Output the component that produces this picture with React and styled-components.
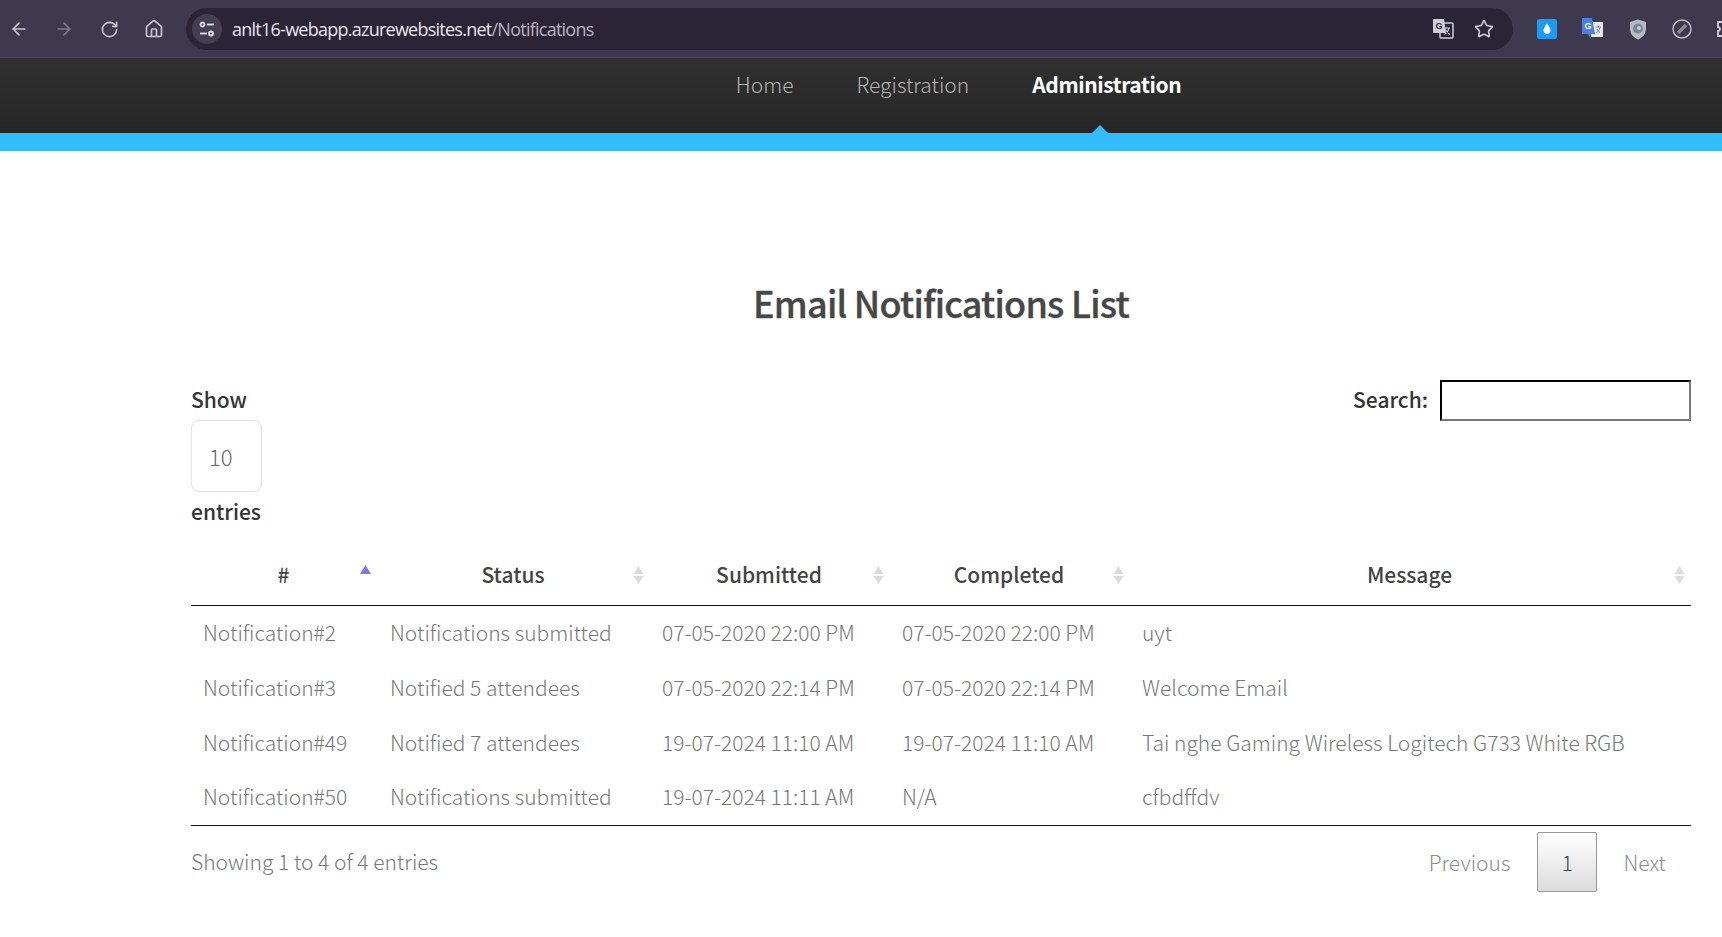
import React from "react";
import styled, { createGlobalStyle } from "styled-components";
import { ArrowLeft, ArrowRight, RotateCw, Home as HomeIcon, Star } from "lucide-react";

const Global = createGlobalStyle`
  html, body { margin: 0; padding: 0; height: 937px; overflow: hidden; background: #fff; }
  body { font-family: "Noto Sans CJK SC", "Open Sans", sans-serif; font-weight: 300; color: #666; }
  * { box-sizing: border-box; }
`;

const Toolbar = styled.div`
  height: 58px; background: #3f3950; border-bottom: 1px solid #4d4859;
  display: flex; align-items: center; overflow: hidden;
  padding: 1px 0 0 6px; position: relative;
`;
const NavIcon = styled.span`
  width: 26px; height: 26px; display: flex; align-items: center; justify-content: center;
  margin-right: 19px; color: ${p => (p.$dim ? "#7f7a8a" : "#c9c6d1")}; flex: none;
`;
const AddressBar = styled.div`
  width: 1327px; height: 42px; margin-left: 0; border-radius: 21px; background: #2b2437;
  display: flex; align-items: center; padding: 0 19px 0 6px; flex: none;
`;
const SiteChip = styled.span`
  width: 30px; height: 30px; border-radius: 50%; background: #443e52; flex: none;
  display: flex; align-items: center; justify-content: center;
`;
const Url = styled.span`
  font-family: "Open Sans", sans-serif; font-weight: 400; font-size: 18px; letter-spacing: -0.75px;
  margin-left: 10px; color: #e8e6ee; flex: 1; white-space: nowrap;
`;
const UrlPath = styled.span`color: #b7b3c2;`;
const BarActions = styled.span`display: flex; align-items: center; gap: 20px; color: #c9c6d1;`;
const Extensions = styled.div`display: flex; align-items: center; gap: 25px; margin-left: 24px; flex: none;`;

const NavBar = styled.nav`
  height: 75px; background: linear-gradient(#303030, #262626);
  display: flex; justify-content: center; gap: 63px; padding: 0 0 0 195px;
`;
const NavLink = styled.a`
  position: relative; height: 75px; line-height: 53px; font-size: 21px; white-space: nowrap;
  font-weight: ${p => (p.$active ? 700 : 300)}; color: ${p => (p.$active ? "#fff" : "#b4b4b4")};
  letter-spacing: ${p => (p.$active ? "-0.4px" : "0")};
  ${p => p.$active && `
    &::after {
      content: ""; position: absolute; left: 60px; bottom: 0; width: 0; height: 0;
      border-left: 8px solid transparent; border-right: 8px solid transparent;
      border-bottom: 8px solid #35bdfb;
    }
  `}
`;
const Stripe = styled.div`height: 18px; background: #35bdfb;`;

const Main = styled.main`padding: 124px 31px 0 191px;`;
const Title = styled.h1`
  margin: 0; text-align: center; font-size: 36px; line-height: 54px; font-weight: 500; color: #474747;
  letter-spacing: -0.78px; -webkit-text-stroke: 0.35px #474747;
`;
const Controls = styled.div`
  display: flex; justify-content: space-between; align-items: flex-start; margin-top: 51px; height: 170px;
`;
const LengthBox = styled.div`
  font-size: 21px; font-weight: 500; line-height: 30px; color: #333; padding-top: 4px;
`;
const LengthLabel = styled.div`line-height: 30px;`;
const SelectBox = styled.div`
  width: 71px; height: 72px; margin: 6px 0 4px; padding-left: 17px; border: 1px solid #e3e3e3; border-radius: 8px;
  display: flex; align-items: center; font-size: 22px; font-weight: 300; color: #666; padding-bottom: 1px;
`;
const SearchBox = styled.label`
  display: flex; align-items: center; gap: 12px; font-size: 21px; font-weight: 500; color: #333;
`;
const SearchText = styled.span`margin-bottom: 3px;`;
const SearchInput = styled.input`
  width: 251px; height: 41px; border-width: 2px; border-style: inset; border-color: #333 #777 #777 #333;
  background: #fff; padding: 0;
`;
const Table = styled.table`
  width: 1500px; border-collapse: collapse; table-layout: fixed;
  border-bottom: 1px solid #111;
`;
const HeadCell = styled.th`
  position: relative; height: 55px; padding: 0 14px 7px 12px; text-align: center;
  font-size: 21px; font-weight: 500; color: #444; border-bottom: 1px solid #111; white-space: nowrap;
`;
const SortMark = styled.svg`
  position: absolute; right: ${p => p.$right}px; top: ${p => p.$top}px;
`;
const Row = styled.tr`height: 55px;`;
const Cell = styled.td`
  padding: 0 12px 2px; font-size: 21px; font-weight: 300; color: #777; white-space: nowrap;
`;
const Footer = styled.div`display: flex; justify-content: space-between; align-items: center; padding-top: 6px;`;
const Info = styled.div`font-size: 21px; color: #777; margin-bottom: 2px;`;
const Pager = styled.div`display: flex; align-items: center; font-size: 21px; color: #8c8c8c; padding-right: 25px;`;
const PageCurrent = styled.span`
  width: 60px; height: 60px; margin: 0 26px 0 27px; display: flex; align-items: center; justify-content: center;
  border: 1px solid #979797; border-radius: 2px; color: #444;
  background: linear-gradient(#fff, #dcdcdc);
`;

const Sort = ({ active, right = 6 }) =>
  active ? (
    <SortMark $right={right} $top={15} width="11" height="9" viewBox="0 0 11 9">
      <path d="M5.5 0 L11 9 L0 9 Z" fill="#7a7bd6" />
    </SortMark>
  ) : (
    <SortMark $right={right} $top={15} width="11" height="20" viewBox="0 0 11 20">
      <path d="M5.5 1 L10.5 9 L.5 9 Z M.5 11 L10.5 11 L5.5 19 Z" fill="#dcdcdc" />
    </SortMark>
  );

const Tune = () => (
  <svg width="18" height="18" viewBox="0 0 18 18" fill="none" stroke="#e3e1e8" strokeWidth="1.8">
    <circle cx="4.5" cy="4.5" r="2" /><path d="M9 4.5h7" /><path d="M2 13.5h7" /><circle cx="13" cy="13.5" r="2" />
  </svg>
);
const Translate = () => (
  <svg width="22" height="22" viewBox="0 0 22 22">
    <rect x="8" y="5" width="13" height="15" rx="1" fill="none" stroke="#d0ced6" strokeWidth="1.5" />
    <path d="M12 10h6M15 9v1M17 10c-.6 3-2 5-4.5 6.500M13.500 11.500c1 2 2.500 4 4.500 5" stroke="#d0ced6" strokeWidth="1.100" fill="none" />
    <path d="M2 1h10l2 14H2a1 1 0 0 1-1-1V2a1 1 0 0 1 1-1Z" fill="#cfcdd5" />
    <text x="3.500" y="11" fontSize="9" fontWeight="700" fontFamily="Liberation Sans" fill="#2b2437">G</text>
  </svg>
);
const Drop = () => (
  <svg width="20" height="20" viewBox="0 0 20 20">
    <rect width="20" height="20" rx="2" fill="#1c9bf0" />
    <path d="M10 4.500c2 3 3.500 4.800 3.500 6.800a3.500 3.500 0 0 1-7 0c0-2 1.500-3.800 3.500-6.800Z" fill="#fff" />
  </svg>
);
const GTranslate = () => (
  <svg width="22" height="22" viewBox="0 0 22 22">
    <rect x="9" y="4" width="12" height="15" fill="#e8e8e8" />
    <path d="M14 9h5M16.500 8v1M18 9.500c-.5 2-1.500 4-3.500 5M15 11c.8 1.500 1.800 3 3 3.600" stroke="#6f8a80" strokeWidth="1" fill="none" />
    <path d="M0 0h10l3 16H9l-1 4-2-4H0Z" fill="#4a7fe6" />
    <text x="2.500" y="11" fontSize="9" fontWeight="700" fontFamily="Liberation Sans" fill="#fff">G</text>
  </svg>
);
const Shield = () => (
  <svg width="18" height="21" viewBox="0 0 18 21">
    <path d="M9 0.500 L17 3 V10 C17 15 13.500 18.500 9 20.500 C4.500 18.500 1 15 1 10 V3 Z" fill="#b7bac2" />
    <circle cx="9" cy="9.500" r="5" fill="#7f8796" /><circle cx="10" cy="9" r="2" fill="#c7ccd4" />
  </svg>
);
const Compass = () => (
  <svg width="20" height="20" viewBox="0 0 20 20" fill="none">
    <circle cx="10" cy="10" r="9" stroke="#bdbac5" strokeWidth="1.500" />
    <path d="M6 14 L14 6" stroke="#8b8794" strokeWidth="3.500" />
  </svg>
);
const Puzzle = () => (
  <svg width="20" height="20" viewBox="0 0 20 20" fill="none" stroke="#d0ced6" strokeWidth="1.800">
    <path d="M1 3h5a2 2 0 0 1 4 0h5v5a2 2 0 0 1 0 4v5h-5a2 2 0 0 0-4 0H1v-5a2 2 0 0 0 0-4Z" />
  </svg>
);

const columns = [
  { label: "#", width: 187, active: true, right: 7 },
  { label: "Status", width: 272, right: 6 },
  { label: "Submitted", width: 240, right: 6 },
  { label: "Completed", width: 240, right: 6 },
  { label: "Message", width: 561, right: 6 },
];
const rows = [
  ["Notification#2", "Notifications submitted", "07-05-2020 22:00 PM", "07-05-2020 22:00 PM", "uyt"],
  ["Notification#3", "Notified 5 attendees", "07-05-2020 22:14 PM", "07-05-2020 22:14 PM", "Welcome Email"],
  ["Notification#49", "Notified 7 attendees", "19-07-2024 11:10 AM", "19-07-2024 11:10 AM", "Tai nghe Gaming Wireless Logitech G733 White RGB"],
  ["Notification#50", "Notifications submitted", "19-07-2024 11:11 AM", "N/A", "cfbdffdv"],
];

export default function App() {
  return (
    <>
      <Global />
      <Toolbar>
        <NavIcon><ArrowLeft size={20} /></NavIcon>
        <NavIcon $dim><ArrowRight size={20} /></NavIcon>
        <NavIcon><RotateCw size={19} /></NavIcon>
        <NavIcon><HomeIcon size={20} /></NavIcon>
        <AddressBar>
          <SiteChip><Tune /></SiteChip>
          <Url>anlt16-webapp.azurewebsites.net<UrlPath>/Notifications</UrlPath></Url>
          <BarActions><Translate /><Star size={20} /></BarActions>
        </AddressBar>
        <Extensions><Drop /><GTranslate /><Shield /><Compass /><Puzzle /></Extensions>
      </Toolbar>
      <NavBar>
        <NavLink>Home</NavLink>
        <NavLink>Registration</NavLink>
        <NavLink $active>Administration</NavLink>
      </NavBar>
      <Stripe />
      <Main>
        <Title>Email Notifications List</Title>
        <Controls>
          <LengthBox>
            <LengthLabel>Show</LengthLabel>
            <SelectBox>10</SelectBox>
            <LengthLabel>entries</LengthLabel>
          </LengthBox>
          <SearchBox><SearchText>Search:</SearchText><SearchInput /></SearchBox>
        </Controls>
        <Table>
          <colgroup>
            {columns.map(c => <col key={c.label} width={c.width} />)}
          </colgroup>
          <thead>
            <tr>
              {columns.map(c => (
                <HeadCell key={c.label}>
                  {c.label}
                  <Sort active={c.active} right={c.right} />
                </HeadCell>
              ))}
            </tr>
          </thead>
          <tbody>
            {rows.map(r => (
              <Row key={r[0]}>
                {r.map((v, i) => <Cell key={i}>{v}</Cell>)}
              </Row>
            ))}
          </tbody>
        </Table>
        <Footer>
          <Info>Showing 1 to 4 of 4 entries</Info>
          <Pager>Previous<PageCurrent>1</PageCurrent>Next</Pager>
        </Footer>
      </Main>
    </>
  );
}
